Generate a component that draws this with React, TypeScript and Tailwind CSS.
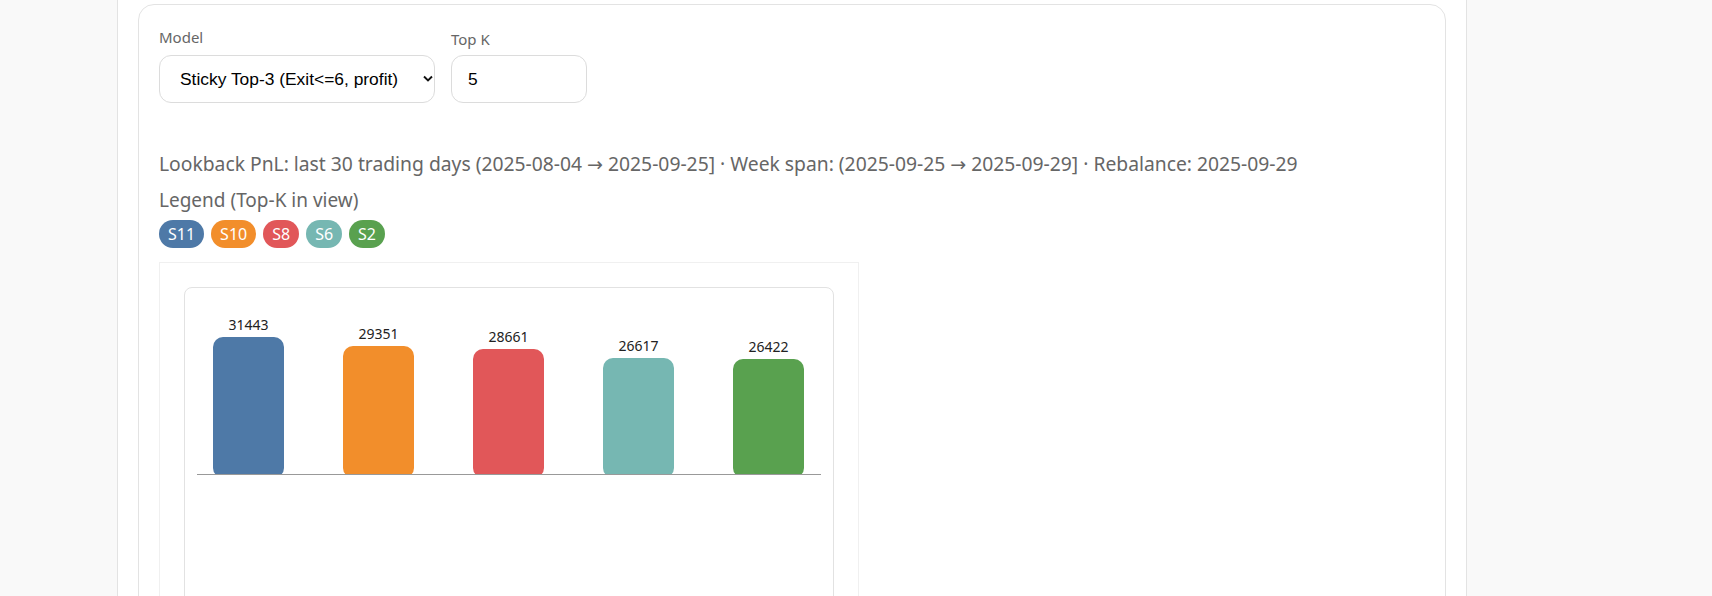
import React from "react";

const bars = [
  { id: "S11", value: 31443, color: "#4e79a7", top: 49 },
  { id: "S10", value: 29351, color: "#f28e2b", top: 58 },
  { id: "S8", value: 28661, color: "#e15759", top: 61 },
  { id: "S6", value: 26617, color: "#76b7b2", top: 70 },
  { id: "S2", value: 26422, color: "#59a14f", top: 71 },
];

const BASE = 186;

function BarChart() {
  return (
    <svg width="648" height="340" className="block">
      {bars.map((b, i) => {
        const x = 28 + i * 130;
        return (
          <g key={b.id}>
            <rect x={x} y={b.top} width="71" height={BASE - b.top + 4} rx="10" fill={b.color} />
            <text
              x={x + 35.5}
              y={b.top - 7}
              textAnchor="middle"
              fontSize="14"
              fill="#222"
              fontFamily="'Noto Sans', 'Open Sans', sans-serif"
            >
              {b.value}
            </text>
          </g>
        );
      })}
      <rect x="0" y={BASE + 1} width="648" height="20" fill="#fff" />
      <line x1="12" x2="636" y1={BASE + 0.5} y2={BASE + 0.5} stroke="#999" strokeWidth="1" />
    </svg>
  );
}

const Arrow = () => <span className="font-['DejaVu_Sans',sans-serif] text-[19px]">→</span>;

export default function App() {
  return (
    <div className="min-h-[596px] bg-[#f9f9f9] font-['Noto_Sans','Open_Sans',sans-serif]">
      <div className="ml-[117px] w-[1350px] min-h-[596px] bg-white border-x border-[#e3e3e3] px-5 pt-1">
        <div className="rounded-2xl border border-[#e3e3e3] bg-white px-5 pt-[22px] h-[620px]">
          {/* controls */}
          <div className="flex gap-4">
            <div className="flex flex-col">
              <label className="text-[15px] leading-5 text-[#666] mb-2">Model</label>
              <div className="relative w-[276px] h-12">
                <select
                  defaultValue="sticky"
                  className="appearance-none w-full h-full rounded-xl border border-[#dcdcdc] bg-white pl-5 pr-8 text-[17.4px] text-black font-['Liberation_Sans',Arial,sans-serif] outline-none"
                >
                  <option value="sticky">Sticky Top-3 (Exit&lt;=6, profit)</option>
                </select>
                <svg
                  className="pointer-events-none absolute right-[2px] top-[20px]"
                  width="10"
                  height="8"
                  viewBox="0 0 10 8"
                >
                  <path d="M1 1.5 L5 5.5 L9 1.5" fill="none" stroke="#111" strokeWidth="1.9" />
                </svg>
              </div>
            </div>
            <div className="flex flex-col">
              <label className="text-[15px] leading-5 text-[#666] mt-[2px] mb-[6px]">Top K</label>
              <input
                defaultValue="5"
                className="w-[136px] h-12 rounded-xl border border-[#dcdcdc] bg-white px-4 text-[17.4px] text-black font-['Liberation_Sans',Arial,sans-serif] outline-none"
              />
            </div>
          </div>

          {/* summary */}
          <p className="mt-[48px] text-[19.3px] leading-[26px] text-[#666]">
            Lookback PnL: last 30 trading days (2025-08-04 <Arrow /> 2025-09-25] · Week span: (2025-09-25 <Arrow /> 2025-09-29] · Rebalance: 2025-09-29
          </p>
          <p className="mt-[10px] text-[19px] leading-[26px] text-[#666]">Legend (Top-K in view)</p>
          <div className="flex gap-[7px] mt-[7px]">
            {bars.map((b) => (
              <span
                key={b.id}
                className="h-7 px-[9px] rounded-full flex items-center text-[16px] text-white"
                style={{ backgroundColor: b.color }}
              >
                {b.id}
              </span>
            ))}
          </div>

          {/* chart */}
          <div className="mt-[14px] w-[700px] border border-[#f0f0f0] p-6 pb-0">
            <div className="rounded-lg border border-[#e2e2e2] bg-white overflow-hidden">
              <BarChart />
            </div>
          </div>
        </div>
      </div>
    </div>
  );
}
